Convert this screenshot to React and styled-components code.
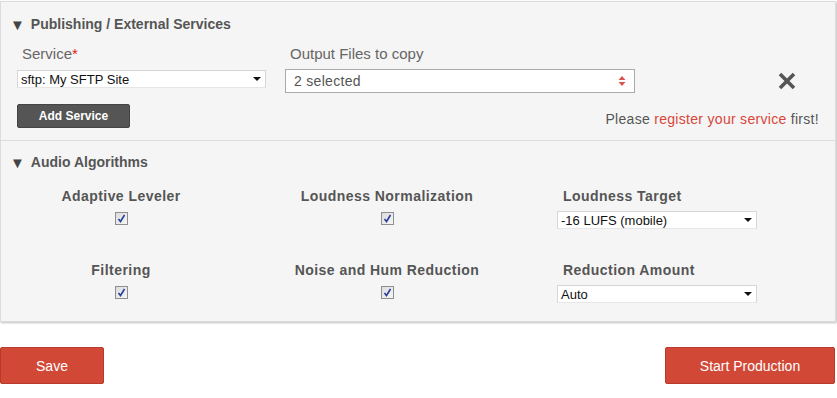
import React from 'react'
import styled, { createGlobalStyle } from 'styled-components'

const Global = createGlobalStyle`
  body {
    margin: 0;
    background: #fff;
    font-family: "Liberation Sans", Arial, sans-serif;
  }
`

const Panel = styled.div`
  width: 834px;
  margin-top: 1px;
  background: #f5f5f5;
  border: 1px solid #dcdcdc;
  box-shadow: 1px 1px 2px rgba(0, 0, 0, 0.25);
`

const Section = styled.div`
  padding: ${props => props.pad || '12px 16px 12px 16px'};
  & + & {
    border-top: 1px solid #dcdcdc;
  }
`

const Header = styled.div`
  display: flex;
  align-items: center;
  gap: 6px;
  height: 20px;
  margin-left: -7px;
  font-size: 14px;
  font-weight: bold;
  color: #555;
`

const Arrow = styled.span`
  font-size: 15px;
  line-height: 1;
  color: #444;
`

const FieldsRow = styled.div`
  display: flex;
  align-items: flex-start;
  margin-top: 11px;
`

const Field = styled.div`
  display: flex;
  flex-direction: column;
  gap: ${props => props.gap || 6}px;
  width: ${props => props.w}px;
  margin-right: ${props => props.mr || 0}px;
`

const Label = styled.div`
  padding-left: 5px;
  font-size: 15px;
  line-height: 18px;
  color: #666;

  span {
    color: #e02020;
  }
`

const Select = styled.div`
  display: flex;
  align-items: center;
  justify-content: space-between;
  box-sizing: border-box;
  width: ${props => props.w}px;
  height: ${props => props.h || 18}px;
  padding: 0 4px 0 3px;
  background: #fff;
  border: 1px solid #d6d6d6;
  border-bottom-color: #e6e6e6;
  font-size: 13px;
  color: #111;
`

const Caret = styled.span`
  width: 0;
  height: 0;
  border-left: 4px solid transparent;
  border-right: 4px solid transparent;
  border-top: 4px solid #111;
`

const Multi = styled.div`
  display: flex;
  align-items: center;
  justify-content: space-between;
  box-sizing: border-box;
  height: 24px;
  padding: 0 8px 0 8px;
  background: #fff;
  border: 1px solid #aaa;
  font-size: 14px;
  color: #555;
  letter-spacing: 0.3px;
`

const Remove = styled.div`
  display: flex;
  align-items: center;
  height: 24px;
  margin-top: 24px;
`

const ActionRow = styled.div`
  display: flex;
  justify-content: space-between;
  align-items: center;
  margin-top: 11px;
`

const DarkButton = styled.button`
  width: 113px;
  height: 24px;
  padding: 0;
  background: #555;
  border: 1px solid #444;
  border-radius: 2px;
  color: #fff;
  font-family: inherit;
  font-size: 12px;
  font-weight: bold;
`

const Note = styled.div`
  padding-top: 6px;
  font-size: 14px;
  color: #555;
  letter-spacing: 0.3px;

  a {
    color: #d9453a;
    text-decoration: none;
  }
`

const AlgoGrid = styled.div`
  display: grid;
  grid-template-columns: 192px 340px 200px;
  row-gap: 32px;
  margin-top: 15px;
  margin-left: 8px;
`

const AlgoCell = styled.div`
  display: flex;
  flex-direction: column;
  align-items: ${props => (props.left ? 'flex-start' : 'center')};
  gap: ${props => (props.left ? 6 : 7)}px;
`

const AlgoLabel = styled.div`
  padding-left: ${props => (props.left ? 6 : 0)}px;
  font-size: 14px;
  line-height: 18px;
  font-weight: bold;
  color: #555;
  letter-spacing: 0.45px;
`

const Check = styled.span`
  display: flex;
  align-items: center;
  justify-content: center;
  box-sizing: border-box;
  width: 13px;
  height: 13px;
  background: linear-gradient(135deg, #dcdcdc, #f6f6f6);
  border: 1px solid #8e8f8f;
`

const Footer = styled.div`
  display: flex;
  justify-content: space-between;
  margin-top: 25px;
  padding-right: 2px;
`

const RedButton = styled.button`
  width: ${props => props.w}px;
  height: 37px;
  padding: 0;
  background: #d14836;
  border: 1px solid #b73a2b;
  border-radius: 2px;
  color: #fff;
  font-family: inherit;
  font-size: 14px;
`

function Checkbox() {
  return (
    <Check>
      <svg width="9" height="9" viewBox="0 0 9 9">
        <path d="M1.5 5 L3.5 7.5 L7.5 1" fill="none" stroke="#2a3f9a" strokeWidth="1.6" />
      </svg>
    </Check>
  )
}

function App() {
  return (
    <>
      <Global />
      <Panel>
        <Section>
          <Header>
            <Arrow>▼</Arrow> Publishing / External Services
          </Header>
          <FieldsRow>
            <Field w={249} mr={19} gap={7}>
              <Label>Service<span>*</span></Label>
              <Select w={249}>
                sftp: My SFTP Site <Caret />
              </Select>
            </Field>
            <Field w={350} mr={143}>
              <Label>Output Files to copy</Label>
              <Multi>
                2 selected
                <svg width="8" height="10" viewBox="0 0 8 10">
                  <path d="M4 0 L7.5 4 H0.5 Z M4 10 L7.5 6 H0.5 Z" fill="#d9534f" />
                </svg>
              </Multi>
            </Field>
            <Remove>
              <svg width="18" height="18" viewBox="0 0 18 18">
                <path d="M2 2 L16 16 M16 2 L2 16" stroke="#555" strokeWidth="3.6" />
              </svg>
            </Remove>
          </FieldsRow>
          <ActionRow>
            <DarkButton>Add Service</DarkButton>
            <Note>
              Please <a href="#register">register your service</a> first!
            </Note>
          </ActionRow>
        </Section>
        <Section pad="11px 16px 18px 16px">
          <Header>
            <Arrow>▼</Arrow> Audio Algorithms
          </Header>
          <AlgoGrid>
            <AlgoCell>
              <AlgoLabel>Adaptive Leveler</AlgoLabel>
              <Checkbox />
            </AlgoCell>
            <AlgoCell>
              <AlgoLabel>Loudness Normalization</AlgoLabel>
              <Checkbox />
            </AlgoCell>
            <AlgoCell left>
              <AlgoLabel left>Loudness Target</AlgoLabel>
              <Select w={200}>
                -16 LUFS (mobile) <Caret />
              </Select>
            </AlgoCell>
            <AlgoCell>
              <AlgoLabel>Filtering</AlgoLabel>
              <Checkbox />
            </AlgoCell>
            <AlgoCell>
              <AlgoLabel>Noise and Hum Reduction</AlgoLabel>
              <Checkbox />
            </AlgoCell>
            <AlgoCell left>
              <AlgoLabel left>Reduction Amount</AlgoLabel>
              <Select w={200}>
                Auto <Caret />
              </Select>
            </AlgoCell>
          </AlgoGrid>
        </Section>
      </Panel>
      <Footer>
        <RedButton w={104}>Save</RedButton>
        <RedButton w={170}>Start Production</RedButton>
      </Footer>
    </>
  )
}

export default App
